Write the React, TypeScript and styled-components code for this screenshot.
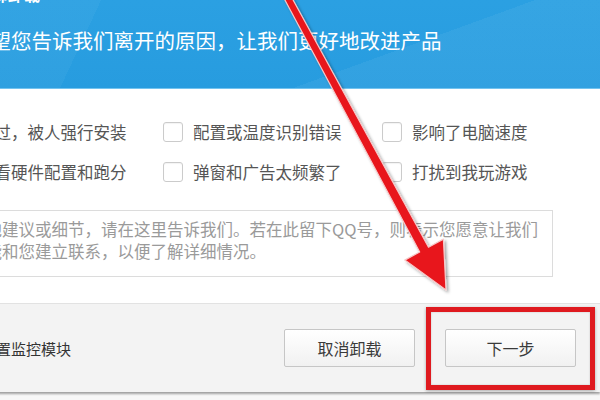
import React from "react";
import styled, { createGlobalStyle } from "styled-components";

const Global = createGlobalStyle`
  html, body { margin: 0; padding: 0; background: #fafafa; }
  body { width: 600px; height: 400px; overflow: hidden; font-family: "Noto Sans CJK SC", "Noto Sans", sans-serif; }
`;

const Stage = styled.div`
  position: relative;
  width: 600px;
  height: 400px;
  overflow: hidden;
  background: #f7f7f7;
`;

const Dialog = styled.div`
  width: 720px;
  margin: -22px 0 0 -120px;
  background: #fff;
  box-shadow: 0 2px 2px rgba(0, 0, 0, 0.35);
  display: flex;
  flex-direction: column;
`;

const Header = styled.div`
  height: 111px;
  box-sizing: border-box;
  padding: 5px 0 0 80px;
  color: #fff;
  background:
    linear-gradient(115deg, rgba(255,255,255,0.04) 0 30%, transparent 30% 100%),
    linear-gradient(160deg, transparent 0 70%, rgba(255,255,255,0.05) 70% 100%),
    linear-gradient(180deg, #2ca1e3 0%, #279cdf 100%);
  border-bottom: 1px solid #73c3ef;
`;

const Title = styled.div`
  font-size: 16px;
  font-weight: bold;
  line-height: 22px;
  white-space: nowrap;
`;

const Subtitle = styled.div`
  margin: 20px 0 0 10px;
  font-size: 20.5px;
  line-height: 30px;
  white-space: nowrap;
`;

const Body = styled.div`
  padding: 33px 47px 26px 14px;
  display: flex;
  flex-direction: column;
`;

const Options = styled.div`
  margin-left: 21px;
  display: grid;
  grid-template-columns: 248px 219px 1fr;
  row-gap: 20px;
`;

const Option = styled.label`
  display: flex;
  align-items: center;
  gap: 10px;
  height: 20px;
  font-size: 16.5px;
  color: #555;
  white-space: nowrap;
`;

const Box = styled.span`
  flex: none;
  width: 20px;
  height: 20px;
  box-sizing: border-box;
  border: 1px solid #cbcbcb;
  border-radius: 3px;
  background: #fff;
  box-shadow: inset 0 1px 1px rgba(0, 0, 0, 0.05);
`;

const Feedback = styled.div`
  margin-top: 28px;
  height: 67px;
  box-sizing: border-box;
  border: 1px solid #dcdcdc;
  padding: 7px 8px;
  font-size: 16.5px;
  line-height: 22px;
  color: #9a9a9a;
  white-space: nowrap;
  overflow: hidden;
`;

const Footer = styled.div`
  height: 89px;
  box-sizing: border-box;
  border-top: 1px solid #e2e2e2;
  background: #f3f3f3;
  padding: 0 24px 0 43px;
  display: flex;
  align-items: center;
  justify-content: space-between;
`;

const Keep = styled.label`
  display: flex;
  align-items: center;
  gap: 8px;
  font-size: 15px;
  color: #333;
  white-space: nowrap;
`;

const Buttons = styled.div`
  display: flex;
  gap: 30px;
`;

const Slot = styled.div`
  position: relative;
`;

const Button = styled.button`
  width: 131px;
  height: 38px;
  border: 1px solid #c6c6c6;
  border-radius: 2px;
  background: linear-gradient(#ffffff, #f1f1f1);
  font-family: "Noto Sans CJK SC", sans-serif;
  font-size: 16px;
  color: #3a3a3a;
  padding: 0;
`;

const RedFrame = styled.div`
  position: absolute;
  top: -22px;
  bottom: -23px;
  left: -19px;
  right: -19px;
  border: 5px solid #df1a1f;
  box-shadow: 0 1px 3px rgba(0, 0, 0, 0.3), inset 0 0 2px rgba(0, 0, 0, 0.2);
  pointer-events: none;
`;

const ArrowLayer = styled.svg`
  position: absolute;
  left: 0;
  top: 0;
  pointer-events: none;
`;

const rows: [string, string, string][] = [
  ["没有用过，被人强行安装", "配置或温度识别错误", "影响了电脑速度"],
  ["只用来看硬件配置和跑分", "弹窗和广告太频繁了", "打扰到我玩游戏"],
];

export default function App() {
  return (
    <Stage>
      <Global />
      <Dialog>
        <Header>
          <Title>鲁大师卸载</Title>
          <Subtitle>希望您告诉我们离开的原因，让我们更好地改进产品</Subtitle>
        </Header>
        <Body>
          <Options>
            {rows.flat().map((t) => (
              <Option key={t}>
                <Box />
                {t}
              </Option>
            ))}
          </Options>
          <Feedback>
            如果您有其他建议或细节，请在这里告诉我们。若在此留下QQ号，则表示您愿意让我们
            <br />
            的工作人员能和您建立联系，以便了解详细情况。
          </Feedback>
        </Body>
        <Footer>
          <Keep>
            <Box />
            保留设置监控模块
          </Keep>
          <Buttons>
            <Button>取消卸载</Button>
            <Slot>
              <Button>下一步</Button>
              <RedFrame />
            </Slot>
          </Buttons>
        </Footer>
      </Dialog>
      <ArrowLayer width="600" height="400" viewBox="0 0 600 400">
        <defs>
          <filter id="sh" x="-20%" y="-20%" width="140%" height="140%">
            <feDropShadow dx="2" dy="2" stdDeviation="1.5" floodColor="#000" floodOpacity="0.35" />
          </filter>
        </defs>
        <polygon
          points="289.4,-6.7 428.5,247.2 443.4,239.1 446,290 404.8,260.1 419.7,252 283.2,-3.3"
          fill="#e8151c"
          stroke="#f6c9c9"
          strokeWidth="1.2"
          strokeLinejoin="round"
          filter="url(#sh)"
        />
      </ArrowLayer>
    </Stage>
  );
}
